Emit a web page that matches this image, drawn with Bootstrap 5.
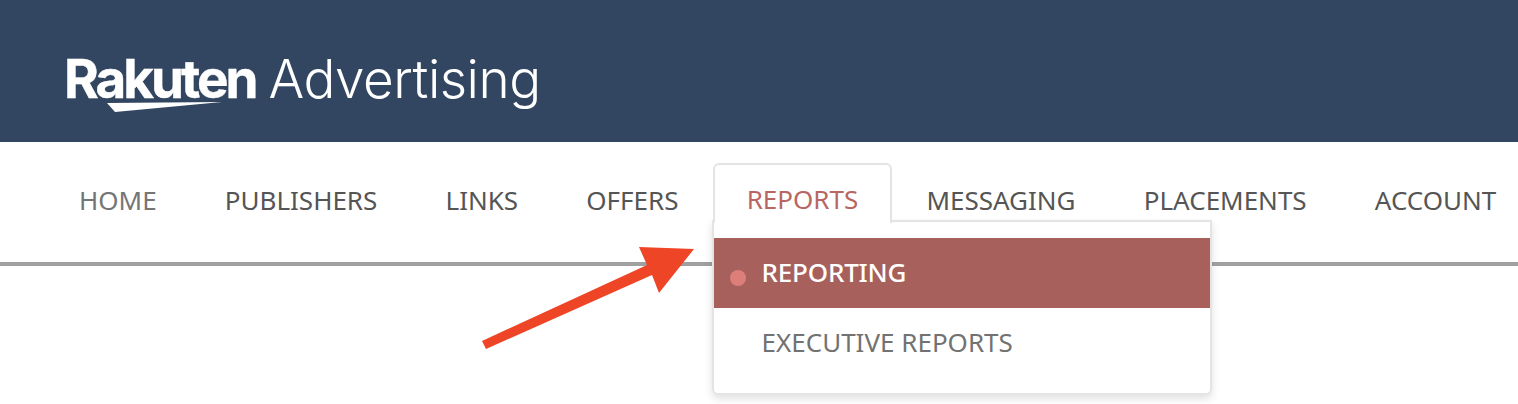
<!doctype html>
<html lang="en"><head><meta charset="utf-8"><title>Rakuten Advertising</title>
<link href="https://cdn.jsdelivr.net/npm/bootstrap@5.3.0/dist/css/bootstrap.min.css" rel="stylesheet">
<style>
html,body{height:404px;overflow:hidden;background:#fff}
body{font-family:"Noto Sans","Open Sans",sans-serif;position:relative}
.brand-bar{height:142px;background:#324661;padding-left:64px;color:#fff}
.brand-logo{position:relative;height:142px;width:490px}
.brand-text{font-size:53px;line-height:1;white-space:nowrap;padding-top:51px}
.brand-a{font-family:"Inter","Lato",sans-serif;font-weight:700;letter-spacing:-3px;-webkit-text-stroke:.4px #fff}
.brand-b{font-family:"Inter","Lato",sans-serif;font-weight:300;margin-left:13px;letter-spacing:-.5px}
.swoosh{position:absolute;left:43px;top:100px}
.nav-strip{height:124px;position:relative}
.nav-rule{position:absolute;left:0;right:0;top:120px;height:4px;background:#a0a0a0}
.nav-list{padding:21px 0 0 44.9px;position:relative;flex-wrap:nowrap;z-index:2}
.nav-list .nav-link{font-size:26px;line-height:34px;padding:20px 34.1px 0;height:58px;color:#555;border:0;white-space:nowrap}
.nav-list .nav-link.is-home{color:#757575}
.nav-list .tab-open .nav-link{color:#b96662;border:2px solid #e4e4e4;border-bottom:0;border-radius:6px 6px 0 0;background:#fff;padding:17px 32.1px 0;position:relative;z-index:3;height:60px}
.tab-open{position:relative}
.report-menu{display:block;position:absolute;left:-1px;top:57px;width:500px;height:175px;padding:16px 0 0;margin:0;border:2px solid #e4e4e4;border-radius:0 0 6px 6px;box-shadow:0 4px 9px rgba(0,0,0,.12);background:#fff;z-index:2}
.report-menu .dropdown-item{font-size:26px;line-height:34px;padding:17px 0 19px 48px;height:70px;color:#727272}
.report-menu .dropdown-item.active{background:#a7605b;color:#fff;font-weight:500;letter-spacing:-.2px;position:relative}
.report-dot{position:absolute;left:16px;top:32px;width:16px;height:16px;border-radius:50%;background:#de7e7a}
.pointer-arrow{position:absolute;left:470px;top:235px;z-index:5}
</style></head>
<body>
<header class="brand-bar">
  <div class="brand-logo">
    <div class="brand-text"><span class="brand-a">Rakuten</span><span class="brand-b">Advertising</span></div>
    <svg class="swoosh" width="116" height="13" viewBox="0 0 116 13"><polygon points="0,3 115,2 8,12" fill="#fff"/></svg>
  </div>
</header>
<nav class="nav-strip">
  <div class="nav-rule"></div>
  <ul class="nav nav-list">
    <li class="nav-item"><a class="nav-link is-home" href="#">HOME</a></li>
    <li class="nav-item"><a class="nav-link" href="#">PUBLISHERS</a></li>
    <li class="nav-item"><a class="nav-link" href="#">LINKS</a></li>
    <li class="nav-item"><a class="nav-link" href="#">OFFERS</a></li>
    <li class="nav-item tab-open"><a class="nav-link" href="#">REPORTS</a>
      <div class="dropdown-menu report-menu">
        <a class="dropdown-item active" href="#"><span class="report-dot"></span>REPORTING</a>
        <a class="dropdown-item" href="#">EXECUTIVE REPORTS</a>
      </div>
    </li>
    <li class="nav-item"><a class="nav-link" href="#">MESSAGING</a></li>
    <li class="nav-item"><a class="nav-link" href="#">PLACEMENTS</a></li>
    <li class="nav-item"><a class="nav-link" href="#">ACCOUNT</a></li>
  </ul>
</nav>
<svg class="pointer-arrow" width="240" height="125" viewBox="470 235 240 125"><polygon points="482,341 647,265 639,247 694,249 659,293 652,275 486,349" fill="#ee4527"/></svg>
</body></html>
